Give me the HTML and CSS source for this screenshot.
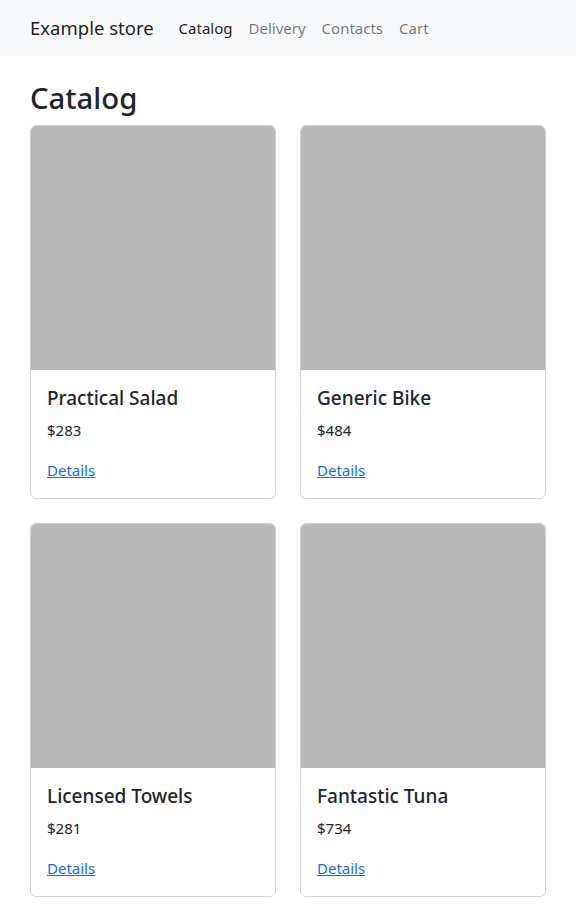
FILE: index.html
```html
<!DOCTYPE html>
<html lang="en">
<head>
<meta charset="utf-8">
<title>Example store</title>
<link rel="stylesheet" href="styles.css">
</head>
<body>
<nav class="navbar">
  <div class="container nav-inner">
    <a class="brand" href="#">Example store</a>
    <ul class="nav">
      <li><a class="nav-link active" href="#">Catalog</a></li>
      <li><a class="nav-link" href="#">Delivery</a></li>
      <li><a class="nav-link" href="#">Contacts</a></li>
      <li><a class="nav-link" href="#">Cart</a></li>
    </ul>
  </div>
</nav>
<main class="container main">
  <h1 class="title">Catalog</h1>
  <div class="grid">
    <div class="card">
      <div class="card-img"></div>
      <div class="card-body">
        <h5 class="card-title">Practical Salad</h5>
        <p class="price">$283</p>
        <a class="details" href="#">Details</a>
      </div>
    </div>
    <div class="card">
      <div class="card-img"></div>
      <div class="card-body">
        <h5 class="card-title">Generic Bike</h5>
        <p class="price">$484</p>
        <a class="details" href="#">Details</a>
      </div>
    </div>
    <div class="card">
      <div class="card-img"></div>
      <div class="card-body">
        <h5 class="card-title">Licensed Towels</h5>
        <p class="price">$281</p>
        <a class="details" href="#">Details</a>
      </div>
    </div>
    <div class="card">
      <div class="card-img"></div>
      <div class="card-body">
        <h5 class="card-title">Fantastic Tuna</h5>
        <p class="price">$734</p>
        <a class="details" href="#">Details</a>
      </div>
    </div>
  </div>
</main>
</body>
</html>
```
FILE: styles.css
```css
* { box-sizing: border-box; }
html, body { margin: 0; padding: 0; }
body {
  font-family: "Noto Sans", "Open Sans", sans-serif;
  font-size: 15px;
  line-height: 24px;
  color: #212529;
  background: #fff;
}
.container {
  width: 540px;
  margin: 0 auto;
  padding: 0 12px;
}
.navbar {
  background: #f8f9fa;
  padding: 8px 0;
}
.nav-inner {
  display: flex;
  align-items: center;
}
.brand {
  font-size: 18.5px;
  line-height: 30px;
  padding: 5px 0;
  margin-right: 17px;
  color: rgba(0,0,0,.9);
  text-decoration: none;
  white-space: nowrap;
}
.nav {
  display: flex;
  list-style: none;
  margin: 0;
  padding: 0;
}
.nav-link {
  display: block;
  padding: 8px;
  font-size: 15px;
  line-height: 24px;
  color: rgba(0,0,0,.55);
  text-decoration: none;
}
.nav-link.active { color: rgba(0,0,0,.9); }
.main { padding-top: 24px; }
.title {
  margin: 0 0 8px;
  font-size: 29.3px;
  font-weight: 500;
  line-height: 36.8px;
}
.grid {
  display: grid;
  grid-template-columns: 1fr 1fr;
  column-gap: 24px;
  row-gap: 24px;
}
.card {
  border: 1px solid rgba(0,0,0,.175);
  border-radius: 6px;
  overflow: hidden;
  display: flex;
  flex-direction: column;
}
.card-img {
  background: #b9b9b9;
  aspect-ratio: 1 / 1;
  width: 100%;
}
.card-body {
  padding: 16px;
}
.card-title {
  margin: 0 0 8px;
  font-size: 19px;
  font-weight: 500;
  line-height: 24px;
}
.price {
  margin: 0 0 16px;
  font-size: 15px;
}
.details {
  color: #0d6efd;
  text-decoration: underline;
  font-size: 15px;
}
```
